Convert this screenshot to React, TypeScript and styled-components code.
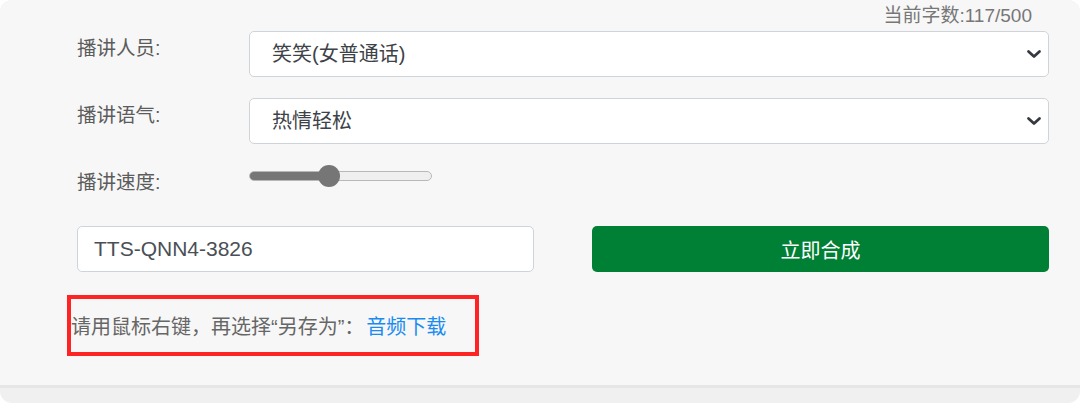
import React from "react";
import styled, { createGlobalStyle } from "styled-components";

const Global = createGlobalStyle`
  html, body { margin: 0; padding: 0; background: #ffffff; }
  body { font-family: "Liberation Sans", "Noto Sans CJK SC", sans-serif; }
  * { box-sizing: border-box; }
`;

const Frame = styled.div`
  width: 1080px;
  height: 403px;
  border-radius: 12px;
  overflow: hidden;
  background: #f0f0f0;
  display: flex;
  flex-direction: column;
`;

const Panel = styled.div`
  background: #f7f7f7;
  height: 388px;
  border-bottom: 3px solid #e6e6e6;
  padding: 0 31px 0 77px;
  display: flex;
  flex-direction: column;
`;

const Counter = styled.div`
  height: 31px;
  text-align: right;
  padding-right: 17px;
  font-size: 19px;
  line-height: 32px;
  color: #777;
`;

const FormRow = styled.div<{ $mt?: number }>`
  display: flex;
  align-items: flex-start;
  margin-top: ${(p) => p.$mt ?? 0}px;
`;

const Label = styled.div<{ $pt?: number }>`
  width: 172px;
  flex: none;
  font-size: 19.5px;
  line-height: 28px;
  color: #5c5c5c;
  padding-top: ${(p) => p.$pt ?? 0}px;
`;

const SelectWrap = styled.div`
  position: relative;
  flex: 1;
`;

const Select = styled.select`
  appearance: none;
  -webkit-appearance: none;
  width: 100%;
  height: 46px;
  border: 1px solid #ced4da;
  border-radius: 5px;
  background: #fff;
  padding: 0 40px 0 22px;
  font-family: inherit;
  font-size: 20px;
  color: #3d4248;
  outline: none;
`;

const Chevron = styled.svg`
  position: absolute;
  right: 7px;
  top: 50%;
  transform: translateY(-50%);
  pointer-events: none;
`;

const Range = styled.input`
  -webkit-appearance: none;
  appearance: none;
  width: 183px;
  height: 22px;
  margin: 0;
  background: transparent;
  &::-webkit-slider-runnable-track {
    height: 10px;
    border-radius: 5px;
    border: 1px solid #b8b8b8;
    background: linear-gradient(to right, #767676 0 43%, #efefef 43% 100%);
  }
  &::-webkit-slider-thumb {
    -webkit-appearance: none;
    width: 22px;
    height: 22px;
    border-radius: 50%;
    background: #767676;
    border: none;
    margin-top: -7px;
  }
`;

const ActionRow = styled.div`
  display: grid;
  grid-template-columns: 1fr 1fr;
  column-gap: 58px;
  margin-top: 30px;
`;

const TextInput = styled.input`
  height: 46px;
  width: 100%;
  border: 1px solid #ced4da;
  border-radius: 5px;
  background: #fff;
  padding: 0 16px;
  font-family: inherit;
  font-size: 21px;
  color: #4a4f55;
  outline: none;
`;

const Button = styled.button`
  height: 46px;
  width: 100%;
  border: none;
  border-radius: 5px;
  background: #008035;
  color: #fff;
  font-family: inherit;
  font-size: 20px;
`;

const Notice = styled.div`
  align-self: flex-start;
  margin-top: 23px;
  margin-left: -10px;
  width: 412px;
  height: 61px;
  border: 4px solid #ff2424;
  display: flex;
  align-items: center;
  font-size: 20px;
  color: #666;
  white-space: nowrap;
`;

const Link = styled.a`
  color: #1a8cf0;
  text-decoration: none;
  margin-left: 2px;
`;

const ChevronIcon = () => (
  <Chevron width="16" height="10" viewBox="0 0 16 10">
    <path d="M2.5 2.5 L8 7.5 L13.5 2.5" fill="none" stroke="#343a40" strokeWidth="2.8" strokeLinecap="round" strokeLinejoin="round" />
  </Chevron>
);

export default function App() {
  return (
    <>
      <Global />
      <Frame>
        <Panel>
          <Counter>当前字数:117/500</Counter>
          <FormRow>
            <Label $pt={3}>播讲人员:</Label>
            <SelectWrap>
              <Select defaultValue="xx">
                <option value="xx">笑笑(女普通话)</option>
              </Select>
              <ChevronIcon />
            </SelectWrap>
          </FormRow>
          <FormRow $mt={21}>
            <Label $pt={3}>播讲语气:</Label>
            <SelectWrap>
              <Select defaultValue="rq">
                <option value="rq">热情轻松</option>
              </Select>
              <ChevronIcon />
            </SelectWrap>
          </FormRow>
          <FormRow $mt={21}>
            <Label $pt={3}>播讲速度:</Label>
            <Range type="range" min={0} max={100} defaultValue={43} readOnly />
          </FormRow>
          <ActionRow>
            <TextInput defaultValue="TTS-QNN4-3826" />
            <Button>立即合成</Button>
          </ActionRow>
          <Notice>
            请用鼠标右键，再选择“另存为”：<Link href="#">音频下载</Link>
          </Notice>
        </Panel>
      </Frame>
    </>
  );
}
